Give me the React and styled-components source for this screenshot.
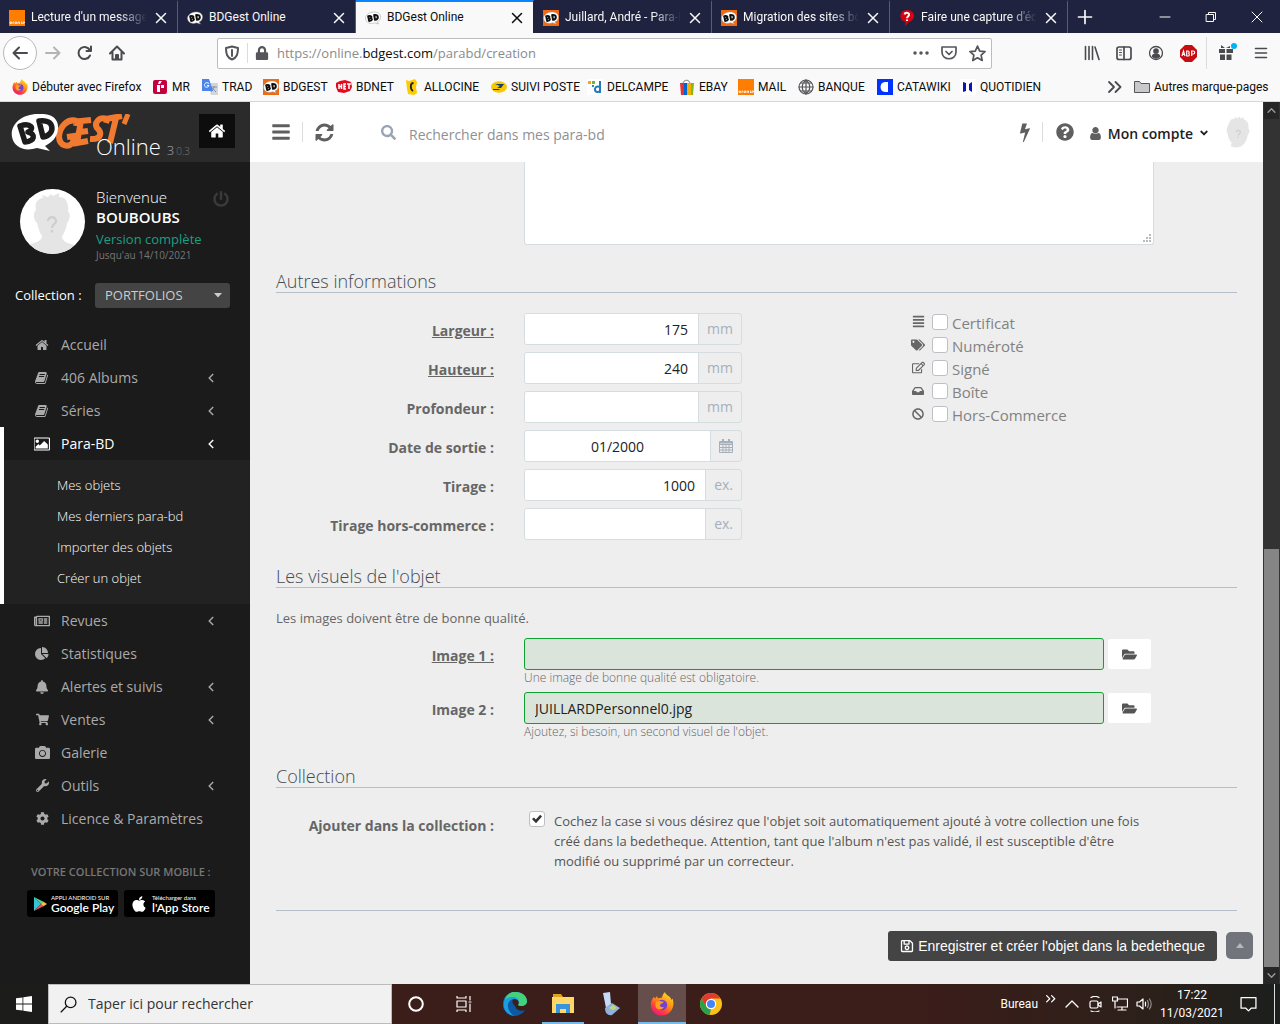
import React from "react";
import styled, { createGlobalStyle, css } from "styled-components";
import {
  FaRegNewspaper, FaBell, FaShoppingCart, FaCamera, FaWrench, FaCog,
  FaPowerOff, FaBars, FaSearch, FaQuestionCircle, FaAlignJustify, FaTags, FaRegEdit,
  FaInbox, FaBan, FaFolderOpen, FaRegSave, FaAngleDown, FaApple, FaLock,
} from "react-icons/fa";

const Global = createGlobalStyle`
  *, *::before, *::after { box-sizing: border-box; }
  body { margin: 0; font-family: "Open Sans", "Noto Sans", sans-serif; }
  button, input, select, textarea { font: inherit; color: inherit; margin: 0; }
  button { border: 0; padding: 0; background: none; }
  svg { display: block; flex: none; }
  h2, p, ul { margin: 0; padding: 0; font-weight: inherit; }
  ul { list-style: none; }
  a { color: inherit; text-decoration: none; }
`;

const uiFont = `"Open Sans", "Noto Sans", sans-serif`;
const compactFont = `Roboto, "Open Sans", sans-serif`;

/* ---------- drawings ---------- */

const Glyph = ({ d, size = 14, box = "0 0 1792 1792", color = "currentColor" }) => (
  <svg width={size} height={size} viewBox={box} fill={color} aria-hidden="true"><path d={d} /></svg>
);

const shapes = {
  home: "M1472 992v480q0 26-19 45t-45 19h-384v-384h-256v384h-384q-26 0-45-19t-19-45v-480q0-1 .5-3t.5-3l575-474 575 474q1 2 1 6zm223-69l-62 74q-8 9-21 11h-3q-13 0-21-7l-692-577-692 577q-12 8-24 7-13-2-21-11l-62-74q-8-10-7-23.5t11-21.5l719-599q32-26 76-26t76 26l244 204v-195q0-14 9-23t23-9h192q14 0 23 9t9 23v408l219 182q10 8 11 21.5t-7 23.5z",
  book: "M1639 478q40 57 18 129l-275 906q-19 64-76.5 107.5t-122.5 43.5h-923q-77 0-148.5-53.5t-99.5-131.5q-24-67-2-127 0-4 3-27t4-37q1-8-3-21.5t-3-19.5q2-11 8-21t16.5-23.5 16.5-23.5q23-38 45-91.5t30-91.5q3-10 .5-30t-.5-28q3-11 17-28t17-23q21-36 42-92t25-90q1-9-2.5-32t.5-28q4-13 22-30.5t22-22.5q19-26 42.5-84.5t27.5-96.5q1-8-3-25.5t-2-26.5q2-8 9-18t18-23 17-21q8-12 16.5-30.5t15-35 16-36 19.5-32 26.5-23.5 36-11.5 47.5 5.5l-1 3q38-9 51-9h761q74 0 114 56t18 130l-274 906q-36 119-71.5 153.5t-128.5 34.5h-869q-27 0-38 15-11 16-1 43 24 70 144 70h923q29 0 56-15.5t35-41.5l300-987q7-22 5-57 38 15 59 43zm-1064 2q-4 13 2 22.5t20 9.5h608q13 0 25.5-9.5t16.5-22.5l21-64q4-13-2-22.5t-20-9.5h-608q-13 0-25.5 9.5t-16.5 22.5zm-83 256q-4 13 2 22.5t20 9.5h608q13 0 25.5-9.5t16.5-22.5l21-64q4-13-2-22.5t-20-9.5h-608q-13 0-25.5 9.5t-16.5 22.5z",
  refresh: "M1639 1056q0 5-1 7-64 268-268 434.5t-478 166.5q-146 0-282.5-55t-243.5-157l-129 129q-19 19-45 19t-45-19-19-45v-448q0-26 19-45t45-19h448q26 0 45 19t19 45-19 45l-137 137q71 66 161 102t187 36q134 0 250-65t186-179q11-17 53-117 8-23 30-23h192q13 0 22.5 9.5t9.5 22.5zm25-800v448q0 26-19 45t-45 19h-448q-26 0-45-19t-19-45 19-45l138-138q-148-137-349-137-134 0-250 65t-186 179q-11 17-53 117-8 23-30 23h-199q-13 0-22.5-9.5t-9.5-22.5v-7q65-268 270-434.5t480-166.5q146 0 284 55.5t245 156.5l130-129q19-19 45-19t45 19 19 45z",
  pie: "M768 890l546 546q-106 108-247.5 168t-298.5 60q-209 0-385.5-103t-279.5-279.5-103-385.5 103-385.5 279.5-279.5 385.5-103v762zm187 6h773q0 157-60 298.5t-168 247.5zm709-128h-768v-768q209 0 385.5 103t279.5 279.5 103 385.5z",
  bolt: "M1333 566q18 20 7 44l-540 1157q-13 25-42 25-4 0-14-2-17-5-25.5-19t-4.5-30l197-808-406 101q-4 1-12 1-18 0-31-11-18-15-13-39l201-825q4-14 16-23t28-9h328q19 0 32 12.5t13 29.5q0 8-5 18l-171 463 396-98q8-2 12-2 19 0 34 15z",
  picture: "M576 576q0 80-56 136t-136 56-136-56-56-136 56-136 136-56 136 56 56 136zm1024 384v448h-1408v-192l320-320 160 160 512-512zm96-704h-1600q-13 0-22.5 9.5t-9.5 22.5v1216q0 13 9.5 22.5t22.5 9.5h1600q13 0 22.5-9.5t9.5-22.5v-1216q0-13-9.5-22.5t-22.5-9.5zm160 32v1216q0 66-47 113t-113 47h-1600q-66 0-113-47t-47-113v-1216q0-66 47-113t113-47h1600q66 0 113 47t47 113z",
  user: "M1536 1399q0 109-62.5 187t-150.5 78h-854q-88 0-150.5-78t-62.5-187q0-85 8.5-160.5t31.5-152 58.5-131 94-89 134.5-34.5q131 128 313 128t313-128q76 0 134.5 34.5t94 89 58.5 131 31.5 152 8.5 160.5zm-256-887q0 159-112.5 271.5t-271.5 112.5-271.5-112.5-112.5-271.5 112.5-271.5 271.5-112.5 271.5 112.5 112.5 271.5z",
};

const Line = ({ size = 16, w = 2, children, color = "currentColor" }) => (
  <svg width={size} height={size} viewBox="0 0 16 16" fill="none" stroke={color} strokeWidth={w} strokeLinecap="round" strokeLinejoin="round" aria-hidden="true">{children}</svg>
);

const Chevron = () => (
  <svg width="6" height="10" viewBox="0 0 6 10" fill="none" stroke="currentColor" strokeWidth="1.400" aria-hidden="true"><path d="M5.200 1L1.200 5l4 4" /></svg>
);

const OrangeIcon = () => (
  <svg width="16" height="16" viewBox="0 0 16 16" aria-hidden="true">
    <path fill="#ff7d00" d="M0 0h16v16H0z" />
    <path stroke="#fff" strokeWidth=".8" fill="none" d="M1 12h1.500v1.500H1zM4 14v-2h1M6 12h1.500v1.500H6zM9 14v-2h1.500v2M12 12h1v1.500h-1M14 12h1.500v1H14v1" />
  </svg>
);

const BdIcon = ({ bg = "none" }) => (
  <svg width="16" height="16" viewBox="0 0 16 16" aria-hidden="true">
    <path fill={bg} d="M0 0h16v16H0z" />
    <path fill="#fff" stroke="#999" strokeWidth=".5" d="M.6 9C0 5.500 3.500 2.500 8.500 2c4.500-.2 7 2 7 5 0 2.500-1.500 4.200-3.500 5l1.500 2-4-1.200C5 14.500 1.200 12.500.6 9z" />
    <path fill="none" stroke="#111" strokeWidth="2" strokeLinejoin="round" d="M3.200 6.300l1 4.700c3.200-.2 3.500-2.300 1.300-2.700C7.500 7 6 5.400 3.200 6.300zM9.200 5l.8 4.800c3.800-.6 4-5.400-.8-4.800z" />
  </svg>
);

const FirefoxIcon = ({ size = 16 }) => (
  <svg width={size} height={size} viewBox="0 0 24 24" aria-hidden="true">
    <defs>
      <linearGradient id={`fx${size}`} x1=".8" y1="0" x2=".2" y2="1">
        <stop offset="0" stopColor="#ffe226" /><stop offset=".45" stopColor="#ff8a16" /><stop offset=".75" stopColor="#ff3647" /><stop offset="1" stopColor="#e31587" />
      </linearGradient>
    </defs>
    <path fill={`url(#fx${size})`} d="M3.500 5l1.800 1.200L7 4l.8 2.500C10 5.500 12 5.800 12 5.800 12 3 15 0 15 0c0 3 6 4 6.500 8l1-1.500C24 10 23.800 15 21 19c-4 5.500-12 6-16.500 2S-.5 10.500 3.500 5z" />
    <circle cx="12" cy="13" r="5.200" fill="#7540d8" />
    <path fill="#ff9f1a" d="M6 9.500C9 8 11 10 13.500 9.500c0 2-3 2-3.500 3.500s1.500 3 4 2c-1.500 3-6 3.500-8 .5-1-2-.5-4.500 0-6z" />
  </svg>
);

const FaceIcon = ({ size, plain }) => (
  <svg width={size} height={size} viewBox="0 0 65 65" aria-hidden="true">
    <path fill="#e5e5e5" d={plain
      ? "M14 22C12 10 20 4 24 6l2-4 4 3 4-4 3 4 5-3 1 5c9 2 10 12 9 18 3 1 3 8-1 11-2 12-6 20-14 24-7 3-16 2-20-1 3-4 2-8-1-10-4-6-4-10-5-14-3-5-3-11 7-29z"
      : "M16 21c-2-8 3-12 7-12l-1-3 6 2 3-3 2 2 6-3 0 4c7 0 10 6 9 15 3 0 2 8-1 11-1 8-4 11-5 14 1 6 8 6 14 9-7 8-14 9-23 9S17 63 9 56c5-3 13-3 13-9-2-3-4-8-5-13-4-3-4-11-1-13z"} />
    <path fill="none" stroke="#cfcfcf" strokeWidth="2.400" d="M28 32c0-5 8-5 8 0 0 3-4 3-4 7m0 2v2.500" />
  </svg>
);

const LogoMark = () => (
  <svg width="121" height="42" viewBox="0 0 121 42" role="img" aria-label="BDGest">
    <g fill="none" stroke="#f27a30" strokeWidth="6">
      <path d="M65 12l1-5C56 4 49 13 48 22c0 11 11 12 14 6l1-6-7 1" />
      <path d="M80 6l-10 1-4 22 11-2M69 18l8-1" />
      <path d="M95 9l1-4C88 2 83 9 86 14c5 4 5 12-7 11" />
      <path d="M95 5l16-3M105 4l-6 25" />
      <path strokeWidth="5" d="M117 0l-4 10" />
    </g>
    <path fill="#fff" d="M1 23C-1 11 10 0 27 0c14-1 21 5 20 15-1 9-6 13-13 17l5 5-13-3C13 38 3 33 1 23z" />
    <path fill="none" stroke="#1c1c1c" strokeWidth="5.500" strokeLinejoin="round" d="M9 12l5 16c10-1 11-8 3-10 7-3 3-10-8-6zM28 7l4 16c13-2 12-19-4-16z" />
  </svg>
);

const CalendarIcon = () => (
  <svg width="14" height="14" viewBox="0 0 14 14" fill="none" stroke="currentColor" aria-hidden="true">
    <path d="M.5 2.500h13v11H.5zM.5 5.500h13M.5 8.500h13M.5 11h13M4 5.500v8M7 5.500v8M10 5.500v8" /><path strokeWidth="2" d="M1 3.500h12M4 0v4M10 0v4" />
  </svg>
);

/* ---------- browser chrome ---------- */

const Screen = styled.div`
  display: flex; flex-direction: column; height: 100vh; overflow: hidden;
  background: #f9f9fa; font-size: 14px;
`;
const TabStrip = styled.header`
  display: flex; height: 33px; flex: none; background: #20233f; color: #f9f9fa;
  font: 12px/33px ${compactFont};
`;
const Tab = styled.div`
  display: flex; align-items: center; gap: 6px; flex: 0 1 178px; min-width: 0; padding: 0 8px 0 9px;
  border-right: 1px solid #5a5c73; border-top: 2px solid transparent; line-height: 31px;
  ${(p) => p.$active && css`background: #f9f9fa; color: #0c0c0d; border-top-color: #0a84ff; border-right-color: #20233f;`}
`;
const TabTitle = styled.span`
  flex: 1; overflow: hidden; white-space: nowrap;
  mask-image: linear-gradient(to right, #000 75%, transparent 100%);
  ${(p) => p.$short && css`mask-image: none;`}
`;
const IconButton = styled.button`
  display: flex; align-items: center; justify-content: center; flex: none;
  width: ${(p) => p.$w || 16}px; height: ${(p) => p.$h || 16}px; color: ${(p) => p.$c || "inherit"};
`;
const WindowButtons = styled.div`display: flex; margin-left: auto;`;

const NavBar = styled.div`
  display: flex; align-items: center; height: 40px; flex: none; padding: 0 3px; color: #4a4a4f;
`;
const BackButton = styled(IconButton)`
  width: 34px; height: 34px; border: 1px solid #b8b8ba; border-radius: 50%; background: #fff;
`;
const AddressBar = styled.div`
  display: flex; align-items: center; flex: 0 1 775px; height: 31px; margin-left: 84px; padding: 0 0 0 6px;
  border: 1px solid #bdbdbf; border-radius: 2px; background: #fff; color: #55555a;
`;
const Divider = styled.span`
  width: 1px; height: ${(p) => p.$h || 20}px; margin: 0 ${(p) => p.$m || 0}px; background: #dcdcdf; flex: none;
`;
const Address = styled.div`
  flex: 1; display: flex; padding-left: 8px; font: 13px/20px ${uiFont}; color: #8a8a8d; white-space: nowrap;
  b { font-weight: 400; color: #0c0c0d; }
`;
const NavTools = styled.div`display: flex; align-items: center; margin-left: auto;`;
const Bookmarks = styled.nav`
  display: flex; align-items: center; height: 29px; flex: none; padding: 0 12px; border-bottom: 1px solid #d7d7db;
  font: 12px/28px ${compactFont}; color: #0c0c0d; white-space: nowrap;
`;
const Bookmark = styled.a`
  display: flex; align-items: center; gap: 4px; flex: 0 1 ${(p) => p.$w}px; min-width: 0;
`;
const MoreBookmarks = styled.div`display: flex; align-items: center; gap: 11px; margin-left: auto;`;

/* ---------- application frame ---------- */

const Page = styled.div`display: flex; flex: 1; min-height: 0; background: #eee;`;
const Sidebar = styled.aside`width: 250px; flex: none; background: #1b1b1b; color: #aaa; overflow: hidden;`;
const Brand = styled.div`
  position: relative; display: flex; align-items: flex-start; height: 60px; padding: 12px 15px 0 11px; background: #2b2b2b;
`;
const BrandName = styled.span`
  position: absolute; left: 96px; top: 30px; font-size: 22px; font-weight: 300; line-height: 28px; color: #fff;
  display: flex; align-items: baseline; gap: 6px;
  small { font-size: 13px; color: #aaa; }
  small > small { font-size: 10px; color: #777; padding-left: 2px; }
`;
const HomeButton = styled(IconButton)`width: 36px; height: 34px; margin-left: auto; background: #0d0d0d; color: #fff;`;
const Profile = styled.div`display: flex; gap: 11px; padding: 25px 24px 0 20px;`;
const Avatar = styled.div`width: 65px; height: 65px; margin-top: 2px; border-radius: 50%; overflow: hidden; background: #fff; flex: none;`;
const Who = styled.div`
  flex: 1; font-size: 15px; font-weight: 300; line-height: 20px; color: #fff; white-space: nowrap;
  strong { display: block; font-weight: 600; }
  em { display: block; font-style: normal; font-weight: 400; font-size: 13px; line-height: 24px; color: #16a085; }
  small { display: block; font-weight: 400; font-size: 10px; line-height: 8px; color: #777; }
`;
const CollectionRow = styled.label`
  display: flex; align-items: center; justify-content: space-between; margin: 24px 20px 0 15px;
  font-size: 13px; line-height: 25px; color: #fff;
`;
const SelectWrap = styled.span`
  display: grid; align-items: center; width: 135px; color: #ccc;
  select {
    grid-area: 1 / 1; appearance: none; height: 25px; padding: 0 24px 0 10px; border: 0; border-radius: 3px;
    background: #444; color: #ccc; font-size: 13px;
  }
  svg { grid-area: 1 / 1; justify-self: end; margin-right: 8px; pointer-events: none; }
`;
const Menu = styled.ul`margin-top: 20px;`;
const MenuGroup = styled.li`${(p) => p.$open && css`border-left: 4px solid #fff;`}`;
const MenuLink = styled.a`
  display: flex; align-items: center; height: 33px; padding: 0 36px 0 ${(p) => (p.$open ? 28 : 32)}px; font-size: 14px;
  color: ${(p) => (p.$open ? "#fff" : "#aaa")};
  > span:first-child { width: 20px; display: flex; justify-content: center; margin-right: 9px; }
  > svg { margin-left: auto; }
`;
const SubMenu = styled.ul`
  padding: 10px 0 10px 53px; background: #222; color: #fff; font-size: 13px; font-weight: 300; line-height: 31px;
`;
const MobileTitle = styled.p`margin: 27px 0 8px 31px; font-size: 11px; line-height: 20px; font-weight: 600; color: #777; white-space: nowrap;`;
const Stores = styled.div`display: flex; gap: 6px; padding-left: 27px;`;
const Store = styled.a`
  display: flex; align-items: center; gap: 4px; width: 91px; height: 27px; padding: 0 6px; border-radius: 3px;
  background: #000; color: #fff; font: 600 12px/13px "Lato", "Open Sans", sans-serif; white-space: nowrap;
  small { display: block; font-size: 6px; line-height: 7px; font-weight: 400; }
`;

const MainColumn = styled.div`flex: 1; min-width: 0; display: flex; flex-direction: column;`;
const TopBar = styled.div`
  display: flex; align-items: center; height: 60px; flex: none; padding: 0 8px 0 22px; background: #fff; color: #5f5f5f;
`;
const SearchBox = styled.label`
  display: flex; align-items: center; gap: 13px; flex: 1; margin-left: 48px; color: #9aa5b1;
  input { flex: 1; min-width: 0; height: 30px; padding: 4px 0 0; border: 0; outline: 0; background: none; font-size: 14px; font-weight: 400; }
  input::placeholder { color: #8f8f94; opacity: 1; }
`;
const Account = styled.button`
  display: flex; align-items: center; gap: 5px; margin: 2px 12px 0 9px; font-size: 14px; font-weight: 600; color: #1d1d22; white-space: nowrap;
`;
const ScrollBar = styled.div`
  display: flex; flex-direction: column; width: 17px; flex: none; padding: 0 1px; background: #333; color: #999;
`;
const ScrollArrow = styled(IconButton)`width: 15px; height: 17px; background: #262626;`;
const Thumb = styled.span`flex: 418 0 0; background: #858585;`;
const Track = styled.span`flex: 430 0 0;`;

/* ---------- form ---------- */

const Form = styled.form`flex: 1; padding: 0 26px; color: #666; overflow: hidden;`;
const FieldRow = styled.div`
  display: grid; grid-template-columns: 218px 1fr; column-gap: 30px; margin-bottom: ${(p) => p.$gap || 0}px;
`;
const Notes = styled.textarea`
  grid-column: 2; display: block; width: 630px; max-width: 100%; height: 83px; border: 1px solid #d5dde0; border-top: 0;
  border-radius: 0 0 3px 3px; background: #fff; resize: vertical; outline: 0;
  &::-webkit-resizer {
    background:
      linear-gradient(#bbb, #bbb) 11px 11px / 2px 2px no-repeat,
      linear-gradient(#bbb, #bbb) 8px 11px / 2px 2px no-repeat,
      linear-gradient(#bbb, #bbb) 5px 11px / 2px 2px no-repeat,
      linear-gradient(#bbb, #bbb) 11px 8px / 2px 2px no-repeat,
      linear-gradient(#bbb, #bbb) 8px 8px / 2px 2px no-repeat,
      linear-gradient(#bbb, #bbb) 11px 5px / 2px 2px no-repeat;
  }
`;
const Title = styled.h2`
  margin: ${(p) => p.$mt}px 0 20px; border-bottom: 1px solid #b4bfc9; font-size: 18px; line-height: 22px; font-weight: 300; color: #444b52;
`;
const Label = styled.label`
  padding-top: 4px; text-align: right; font-size: 14px; line-height: 28px; font-weight: 700; color: #666;
  text-decoration: ${(p) => (p.$required ? "underline" : "none")};
`;
const Columns = styled.div`display: flex; > :last-child { margin-left: 168px; }`;
const Group = styled.div`
  display: flex; width: 218px; height: 32px; border: 1px solid #d5dde0; border-radius: 3px; overflow: hidden; color: #a5b0bb; font-size: 14px; line-height: 28px;
  input {
    flex: 1; min-width: 0; padding: 2px 10px 0; border: 0; border-right: 1px solid #d5dde0; background: #fff;
    color: #222; text-align: ${(p) => p.$align || "right"}; outline: 0;
  }
  span { display: flex; align-items: center; justify-content: center; padding: 0 8px; }
`;
const Options = styled.ul`width: 200px; margin-top: -3px;`;
const Option = styled.li`
  display: flex; align-items: center; height: 23px; font-size: 15px; line-height: 20px; color: #828282;
  > span { width: 16px; margin-right: 6px; display: flex; justify-content: center; color: #666; }
  label { padding: 2px 0 0 4px; }
`;
const Check = styled.input`
  appearance: none; display: grid; place-items: center; width: 16px; height: 16px; flex: none; border: 1px solid #bfbfc6; border-radius: 3px; background: #fff;
  &:checked::before {
    content: ""; width: 10px; height: 9px; background: #333;
    clip-path: polygon(0 50%, 20% 34%, 38% 55%, 82% 4%, 100% 22%, 40% 96%);
  }
`;
const Intro = styled.p`font-size: 13px; line-height: 20px; margin-bottom: 10px;`;
const FileLine = styled.div`
  display: flex; gap: 4px;
  input { flex: 0 1 580px; min-width: 0; height: 32px; padding: 0 10px; border: 1px solid #0fa032; border-radius: 3px; background: #dbe4db; color: #222; outline: 0; }
  button { width: 43px; height: 30px; margin-top: 1px; display: flex; align-items: center; justify-content: center; background: #fff; border-radius: 2px; color: #555; }
`;
const Hint = styled.p`font-size: 12px; line-height: 16px; font-weight: 300; color: #666;`;
const AutoAdd = styled.div`
  display: flex; align-items: flex-start; gap: 9px; padding: 3px 80px 0 5px; font-size: 13px; line-height: 20px; color: #555;
`;
const Footer = styled.div`
  display: flex; justify-content: flex-end; gap: 9px; margin-right: -16px; padding-top: 20px;
`;
const Rule = styled.hr`margin: 39px 0 0; border: 0; border-top: 1px solid #b4bfc9;`;
const SaveButton = styled.button`
  display: flex; align-items: center; gap: 4px; height: 30px; padding: 0 12px; border-radius: 3px; background: #444; color: #fff;
  font: 14px/30px "Liberation Sans", Arial, sans-serif; white-space: nowrap;
`;
const TopButton = styled(IconButton)`width: 27px; height: 27px; margin-top: 1px; border-radius: 5px; background: #71757b; color: #b5b8c4;`;

/* ---------- task bar ---------- */

const TaskBar = styled.footer`
  display: flex; align-items: stretch; height: 40px; flex: none; color: #fff; font: 12px/18px ${compactFont};
  background: linear-gradient(to right, #1c1c1b 0, #1c1c1b 48px, #3b1d1a 392px, #3b1d1a 72%, #2c201a 90%, #1c1f1d 100%);
`;
const TaskSearch = styled.label`
  display: flex; align-items: center; gap: 11px; width: 344px; padding: 0 11px; background: #f1f1f1; border: 1px solid #bbb; color: #111;
  input { flex: 1; min-width: 0; border: 0; outline: 0; padding: 0; background: none; font: 14px/20px ${uiFont}; }
  input::placeholder { color: #333; opacity: 1; }
`;
const TaskButton = styled.button`
  display: flex; align-items: center; justify-content: center; width: ${(p) => p.$w || 49}px;
  background: ${(p) => (p.$active ? "#654e4b" : "none")};
  box-shadow: ${(p) => (p.$running ? "inset 0 -2px #76b9ed" : "none")};
`;
const Tray = styled.div`display: flex; align-items: center; margin-left: auto; padding-right: 3px;`;
const TrayIcons = styled.div`display: flex; align-items: center; gap: 8px; margin-right: 8px;`;
const More = styled.span`align-self: flex-start;`;
const Clock = styled.time`width: 64px; text-align: center;`;

const CloseX = () => <Line size={16} w={1.5}><path d="M3.500 3.500l9 9M12.500 3.500l-9 9" /></Line>;

const tabs = [
  { title: "Lecture d'un message - Orange", icon: <OrangeIcon /> },
  { title: "BDGest Online", icon: <BdIcon />, short: true },
  { title: "BDGest Online", icon: <BdIcon />, short: true, active: true },
  { title: "Juillard, André - Para-BD", icon: <BdIcon bg="#f26a0f" /> },
  { title: "Migration des sites bdgest", icon: <BdIcon bg="#f26a0f" /> },
  { title: "Faire une capture d'écran", icon: (
    <svg width="16" height="16" viewBox="0 0 16 16" aria-hidden="true"><path fill="#d8000f" d="M8 0c9 0 9 10 2 12l-4 4 .5-4C-1 10 0 0 8 0z" /><path stroke="#fff" strokeWidth="2" fill="none" d="M5.500 4.500C6 2 10.500 2.500 10 5c-.3 1.500-2 1.500-2 3.200M8 9.500v1.500" /></svg>
  ) },
];

const bookmarks = [
  { name: "Débuter avec Firefox", w: 140, icon: <FirefoxIcon /> },
  { name: "MR", w: 50, icon: <svg width="16" height="16" viewBox="0 0 16 16"><rect x="1" y="1" width="14" height="14" rx="2" fill="#c4003e" /><path fill="#fff" d="M5 6h3v7H5zM9 6h3v3H9zM7 2h3L8 5H6z" /></svg> },
  { name: "TRAD", w: 61, icon: <svg width="16" height="16" viewBox="0 0 16 16"><path fill="#d5d5d5" d="M6 4h10v12H9z" /><path stroke="#8295a5" fill="none" d="M9 8h6M12 7v1c0 2-2 4-3 5M10 9l4 4" /><path fill="#4a85ee" d="M0 0h7l4 12H0z" /><path stroke="#fff" fill="none" d="M7 4.500C4 2.500 2 5 2.500 6.500 3 9 7 8.500 7 6.500H5" /></svg> },
  { name: "BDGEST", w: 73, icon: <BdIcon bg="#f26a0f" /> },
  { name: "BDNET", w: 68, icon: <svg width="16" height="16" viewBox="0 0 16 16"><path fill="#e30b20" d="M0 4l4-2 5-1 6 2 1 5-2 4-6 2-6-1-2-5z" /><path stroke="#fff" strokeWidth="1.500" fill="none" d="M3 5v5M5.500 5v5M3 7.500h2.500M10 5H8v5h2M8 7.500h2M11 5h4M13 5v5" /></svg> },
  { name: "ALLOCINE", w: 87, icon: <svg width="16" height="16" viewBox="0 0 16 16"><path fill="#fecc00" d="M2 1l3 1 6-2 2 3-1 5 1 6-3 2-6-1-1-5z" /><path stroke="#222" strokeWidth="1.800" fill="none" d="M9.500 4C6 4 6 10 9 12" /></svg> },
  { name: "SUIVI POSTE", w: 96, icon: <svg width="16" height="16" viewBox="0 0 16 16"><ellipse cx="8" cy="8" rx="8" ry="5.800" fill="#f5c800" /><path fill="#173a7a" d="M4 5h9l-3 4H6l3-2zM2 10h7l-1 1H2z" /></svg> },
  { name: "DELCAMPE", w: 92, icon: <svg width="16" height="16" viewBox="0 0 16 16"><path fill="#fff" d="M0 0h16v16H0z" /><path fill="#f6a21a" d="M1 2h3v3H1z" /><path fill="#69b445" d="M5 2h3v3H5z" /><path fill="#2785c7" d="M5 6h2v2H5z" /><path stroke="#2179bd" strokeWidth="2" fill="none" d="M13 2v12M13 8c-5-2-7 4-3 5 2 .5 3-1 3-2" /></svg> },
  { name: "EBAY", w: 59, icon: <svg width="16" height="16" viewBox="0 0 16 16"><path fill="none" stroke="#777" d="M4 5c0-5 7-5 7 0" /><path fill="#e53238" d="M1 4h4v12H2z" /><path fill="#0064d2" d="M5 4h3v12H5z" /><path fill="#f5af02" d="M8 4h4v12H8z" /><path fill="#86b817" d="M12 4h3l-1 12h-2z" /></svg> },
  { name: "MAIL", w: 60, icon: <OrangeIcon /> },
  { name: "BANQUE", w: 79, icon: <Line w={1.2} color="#55555a"><circle cx="8" cy="8" r="7" /><path d="M1 8h14M8 1v14M3 4h10M3 12h10M8 1C3 5 3 11 8 15M8 1c5 4 5 10 0 14" /></Line> },
  { name: "CATAWIKI", w: 83, icon: <svg width="16" height="16" viewBox="0 0 16 16"><path fill="#0033ff" d="M0 0h16v16H0z" /><path fill="#fff" d="M11 3v10H8C2 13 2 3 8 3z" /></svg> },
  { name: "QUOTIDIEN", w: 84, icon: <svg width="16" height="16" viewBox="0 0 16 16"><path fill="#fff" d="M0 0h16v16H0z" /><path fill="#0d13b4" d="M3 3l3 1v8l-3 1zM12 3L9 5v6l3 2z" /></svg> },
];

const menuEntries = [
  { name: "Accueil", icon: <Glyph d={shapes.home} /> },
  { name: "406 Albums", icon: <Glyph d={shapes.book} />, more: true },
  { name: "Séries", icon: <Glyph d={shapes.book} />, more: true },
  { name: "Para-BD", icon: <Glyph d={shapes.picture} size={16} box="0 0 1856 1792" />, more: true, open: true, items: ["Mes objets", "Mes derniers para-bd", "Importer des objets", "Créer un objet"] },
  { name: "Revues", icon: <FaRegNewspaper size={16} />, more: true },
  { name: "Statistiques", icon: <Glyph d={shapes.pie} /> },
  { name: "Alertes et suivis", icon: <FaBell size={14} />, more: true },
  { name: "Ventes", icon: <FaShoppingCart size={13} />, more: true },
  { name: "Galerie", icon: <FaCamera size={15} /> },
  { name: "Outils", icon: <FaWrench size={13} />, more: true },
  { name: "Licence & Paramètres", icon: <FaCog size={13} /> },
];

const fields = [
  { id: "largeur", label: "Largeur :", value: "175", unit: "mm", required: true },
  { id: "hauteur", label: "Hauteur :", value: "240", unit: "mm", required: true },
  { id: "profondeur", label: "Profondeur :", value: "", unit: "mm" },
  { id: "sortie", label: "Date de sortie :", value: "01/2000", unit: <CalendarIcon />, align: "center" },
  { id: "tirage", label: "Tirage :", value: "1000", unit: "ex." },
  { id: "tirage-hc", label: "Tirage hors-commerce :", value: "", unit: "ex." },
];

const options = [
  { id: "certificat", label: "Certificat", icon: <FaAlignJustify size={13} /> },
  { id: "numerote", label: "Numéroté", icon: <FaTags size={14} /> },
  { id: "signe", label: "Signé", icon: <FaRegEdit size={13} /> },
  { id: "boite", label: "Boîte", icon: <FaInbox size={12} /> },
  { id: "hors-commerce", label: "Hors-Commerce", icon: <FaBan size={12} /> },
];

const images = [
  { id: "image1", label: "Image 1 :", value: "", hint: "Une image de bonne qualité est obligatoire.", required: true },
  { id: "image2", label: "Image 2 :", value: "JUILLARDPersonnel0.jpg", hint: "Ajoutez, si besoin, un second visuel de l'objet." },
];

function BrowserChrome() {
  return (
    <>
      <TabStrip>
        {tabs.map((t, i) => (
          <Tab key={i} $active={t.active}>
            {t.icon}
            <TabTitle $short={t.short}>{t.title}</TabTitle>
            <IconButton aria-label="Fermer l'onglet"><CloseX /></IconButton>
          </Tab>
        ))}
        <IconButton $w={34} $h={33} aria-label="Nouvel onglet"><Line w={1.7}><path d="M8 1.500v13M1.500 8h13" /></Line></IconButton>
        <WindowButtons>
          <IconButton $w={46} $h={33} aria-label="Réduire"><Line w={1} size={16}><path d="M3 8h10" /></Line></IconButton>
          <IconButton $w={46} $h={33} aria-label="Restaurer"><Line w={1}><path d="M3.500 5.500h7v7h-7zM5.500 5.500v-2h7v7h-2" /></Line></IconButton>
          <IconButton $w={46} $h={33} aria-label="Fermer"><Line w={1}><path d="M3 3l10 10M13 3L3 13" /></Line></IconButton>
        </WindowButtons>
      </TabStrip>
      <NavBar>
        <BackButton aria-label="Précédent"><Line><path d="M15 8H1.500M7 2.500L1.500 8 7 13.500" /></Line></BackButton>
        <IconButton $w={32} $h={32} $c="#b4b4b6" aria-label="Suivant"><Line><path d="M1 8h13.500M9 2.500L14.500 8 9 13.500" /></Line></IconButton>
        <IconButton $w={32} $h={32} aria-label="Actualiser"><Line><path d="M13 10.500A6 6 0 1 1 13 5.500M14 1.500V6H9.500" /></Line></IconButton>
        <IconButton $w={32} $h={32} aria-label="Accueil"><Line><path d="M1 8.500L8 1.500l7 7M3.500 7.500v7h9v-7M7 14v-4h2v4" /></Line></IconButton>
        <AddressBar>
          <Line><path d="M8 1.500L14 3c0 6-1 9.500-6 11.500C3 12.500 2 9 2 3z" /><path d="M8 5v6" /></Line>
          <Divider $m={7} />
          <FaLock size={14} />
          <Address>https://online.<b>bdgest.com</b>/parabd/creation</Address>
          <IconButton $w={28} aria-label="Actions"><Line><path strokeWidth="3.500" d="M2 8h0M8 8h0M14 8h0" /></Line></IconButton>
          <IconButton $w={28} aria-label="Pocket"><Line w={1.7}><path d="M1 2h14v5c0 9-14 9-14 0zM5 6.500l3 3 3-3" /></Line></IconButton>
          <IconButton $w={28} aria-label="Marquer cette page"><Line size={17} w={1.6}><path d="M8 1l2.100 4.700 5 .5-3.700 3.400 1 5L8 12l-4.400 2.600 1-5L.9 6.200l5-.5z" /></Line></IconButton>
        </AddressBar>
        <NavTools>
          <IconButton $w={32} aria-label="Bibliothèque"><Line w={1.6}><path d="M1.500 1.500v13M5 1.500v13M8.500 1.500v13M11 2l4 12.500" /></Line></IconButton>
          <IconButton $w={32} aria-label="Panneaux latéraux"><Line w={1.7}><rect x="1" y="2" width="14" height="12.500" rx="2" /><path d="M8 2v12.500" /><path strokeWidth="1" d="M3.500 5h2M3.500 7.500h2M3.500 10h2" /></Line></IconButton>
          <IconButton $w={32} aria-label="Compte"><Line w={1.3}><circle cx="8" cy="8" r="6.500" /><circle cx="8" cy="6" r="2.200" fill="currentColor" /><path fill="currentColor" d="M4.500 11.500c0-3 7-3 7 0-2 2-5 2-7 0z" /></Line></IconButton>
          <IconButton $w={32} aria-label="Adblock Plus"><svg width="17" height="17" viewBox="0 0 17 17"><path fill="#c70d12" d="M5 0h7l5 5v7l-5 5H5l-5-5V5z" /><path fill="none" stroke="#fff" strokeWidth="1.200" d="M2 11l1.500-5L5 11M2.500 9.500h2M6.700 6v5h1.500c1.500 0 1.500-2.500 0-2.500 1.300 0 1-2.500 0-2.500zM11.700 11V6h1.500c2 0 2 3 0 3h-1" /></svg></IconButton>
          <Divider $h={32} $m={2} />
          <IconButton $w={36} aria-label="Nouveautés"><svg width="20" height="20" viewBox="0 0 20 20"><path fill="#4a4a4f" d="M2 6h6v4H2zM9.500 6H16v4H9.500zM3 11.500h5V17H3zM9.500 11.500h5V17h-5zM4 2l4 3H4zM13 3l-4 2h4z" /><circle cx="17" cy="3" r="3" fill="#00b3f4" /></svg></IconButton>
          <IconButton $w={32} aria-label="Menu"><Line w={1.600}><path d="M2.500 3.500h11M2.500 8h11M2.500 12.500h11" /></Line></IconButton>
        </NavTools>
      </NavBar>
      <Bookmarks>
        {bookmarks.map((b) => <Bookmark key={b.name} href="#" $w={b.w}>{b.icon}{b.name}</Bookmark>)}
        <MoreBookmarks>
          <IconButton aria-label="Plus"><Line w={1.800} color="#4a4a4f"><path d="M2 3l5 5-5 5M8.500 3l5 5-5 5" /></Line></IconButton>
          <Bookmark href="#" $w={134}>
            <svg width="16" height="16" viewBox="0 0 16 16"><path fill="#c9c9cc" stroke="#555" d="M.5 2.500h5l1.500 2h8.500v9H.5z" /></svg>
            Autres marque-pages
          </Bookmark>
        </MoreBookmarks>
      </Bookmarks>
    </>
  );
}

function SideNav() {
  return (
    <Sidebar>
      <Brand>
        <LogoMark />
        <BrandName>Online <small>3<small>0.3</small></small></BrandName>
        <HomeButton aria-label="Accueil"><Glyph d={shapes.home} size={18} /></HomeButton>
      </Brand>
      <Profile>
        <Avatar><FaceIcon size={65} /></Avatar>
        <Who>Bienvenue<strong>BOUBOUBS</strong><em>Version complète</em><small>Jusqu'au 14/10/2021</small></Who>
        <IconButton $h={24} $c="#3a3a3a" aria-label="Déconnexion"><FaPowerOff size={16} /></IconButton>
      </Profile>
      <CollectionRow>
        Collection :
        <SelectWrap>
          <select defaultValue="PORTFOLIOS"><option>PORTFOLIOS</option></select>
          <svg width="8" height="5" viewBox="0 0 8 5"><path fill="currentColor" d="M0 0h8L4 4.500z" /></svg>
        </SelectWrap>
      </CollectionRow>
      <Menu>
        {menuEntries.map((m) => (
          <MenuGroup key={m.name} $open={m.open}>
            <MenuLink href="#" $open={m.open}><span>{m.icon}</span>{m.name}{m.more && <Chevron />}</MenuLink>
            {m.items && <SubMenu>{m.items.map((s) => <li key={s}><a href="#">{s}</a></li>)}</SubMenu>}
          </MenuGroup>
        ))}
      </Menu>
      <MobileTitle>VOTRE COLLECTION SUR MOBILE :</MobileTitle>
      <Stores>
        <Store href="#">
          <svg width="14" height="16" viewBox="0 0 14 16"><path fill="#35c3d6" d="M1 1v14l7-7z" /><path fill="#58d28a" d="M1 1l10 5-3 2z" /><path fill="#f0485f" d="M1 15l10-5-3-2z" /><path fill="#f7c33c" d="M10.500 5.700L14 8l-3.500 2.300L8 8z" /></svg>
          <span><small>APPLI ANDROID SUR</small>Google Play</span>
        </Store>
        <Store href="#"><FaApple size={18} /><span><small>Télécharger dans</small>l'App Store</span></Store>
      </Stores>
    </Sidebar>
  );
}

function ObjectForm() {
  return (
    <Form onSubmit={(e) => e.preventDefault()}>
      <FieldRow><Notes aria-label="Description" /></FieldRow>
      <Title $mt={25}>Autres informations</Title>
      <Columns>
        <div>
          {fields.map((f) => (
            <FieldRow key={f.id} $gap={7}>
              <Label htmlFor={f.id} $required={f.required}>{f.label}</Label>
              <Group $align={f.align}><input id={f.id} defaultValue={f.value} /><span>{f.unit}</span></Group>
            </FieldRow>
          ))}
        </div>
        <Options>
          {options.map((o) => (
            <Option key={o.id}><span>{o.icon}</span><Check type="checkbox" id={o.id} /><label htmlFor={o.id}>{o.label}</label></Option>
          ))}
        </Options>
      </Columns>
      <Title $mt={18}>Les visuels de l'objet</Title>
      <Intro>Les images doivent être de bonne qualité.</Intro>
      {images.map((f) => (
        <FieldRow key={f.id} $gap={6}>
          <Label htmlFor={f.id} $required={f.required}>{f.label}</Label>
          <div>
            <FileLine><input id={f.id} defaultValue={f.value} /><button type="button" aria-label="Parcourir"><FaFolderOpen size={15} /></button></FileLine>
            <Hint>{f.hint}</Hint>
          </div>
        </FieldRow>
      ))}
      <Title $mt={25}>Collection</Title>
      <FieldRow>
        <Label htmlFor="auto">Ajouter dans la collection :</Label>
        <AutoAdd>
          <Check type="checkbox" id="auto" defaultChecked />
          <label htmlFor="auto">Cochez la case si vous désirez que l'objet soit automatiquement ajouté à votre collection une fois créé dans la bedetheque. Attention, tant que l'album n'est pas validé, il est susceptible d'être modifié ou supprimé par un correcteur.</label>
        </AutoAdd>
      </FieldRow>
      <Rule />
      <Footer>
        <SaveButton type="submit"><FaRegSave size={14} />Enregistrer et créer l'objet dans la bedetheque</SaveButton>
        <TopButton type="button" aria-label="Haut de page"><svg width="8" height="5" viewBox="0 0 8 5"><path fill="currentColor" d="M0 5h8L4 0z" /></svg></TopButton>
      </Footer>
    </Form>
  );
}

function WindowsBar() {
  return (
    <TaskBar>
      <TaskButton $w={48} aria-label="Démarrer"><svg width="16" height="16" viewBox="0 0 16 16" fill="#fff"><path d="M0 2.300L6.500 1.400v6.200H0zM7.300 1.300L16 0v7.600H7.300zM0 8.400h6.500v6.200L0 13.700zM7.300 8.400H16V16l-8.700-1.300z" /></svg></TaskButton>
      <TaskSearch>
        <Line size={17} w={1.200}><circle cx="10" cy="6" r="5" /><path d="M6.300 9.700L1 15" /></Line>
        <input placeholder="Taper ici pour rechercher" />
      </TaskSearch>
      <TaskButton $w={48} aria-label="Cortana"><Line w={2}><circle cx="8" cy="8" r="6.800" /></Line></TaskButton>
      <TaskButton $w={48} aria-label="Affichage des tâches"><Line w={1.200}><path d="M1 0v2h9V0M1 16v-2h9v2M1 5h9v6H1zM14 0v4M14 8v8M13 6h2" /></Line></TaskButton>
      <TaskButton $w={54} aria-label="Edge">
        <svg width="24" height="24" viewBox="0 0 24 24"><path fill="#0c59a4" d="M12 0a12 12 0 1 0 10 18c-4 2-9 0-10-4-6-6 0-9 4-8z" /><path fill="#1b9de2" d="M1 9C3-3 23-3 24 9c0 5-6 6-9 4 3-4-3-8-7-5-5 3-4 11 3 16C4 23-1 17 1 9z" /><path fill="#45d07a" d="M10 0c8-1 14 4 14 9s-6 6-9 4c3-3 0-8-5-8C6 5 4 6 2 8c1-4 4-7 8-8z" /></svg>
      </TaskButton>
      <TaskButton $w={42} $running aria-label="Explorateur de fichiers">
        <svg width="22" height="20" viewBox="0 0 22 20"><path fill="#dfa418" d="M1 0h8l2 3H1z" /><path fill="#ffd768" d="M0 3h22v16H0z" /><path fill="#3994dc" d="M4 10h14v9h-4v-4H8v4H4z" /></svg>
      </TaskButton>
      <TaskButton $w={54} aria-label="Scanner">
        <svg width="20" height="24" viewBox="0 0 20 24"><path fill="#c4daf5" d="M2 1l7-1 1 12-5 4z" /><path fill="#8fb2df" d="M4 16l7-5 8 5-8 7c-4 1-7-2-7-7z" /><path fill="#c6d86a" d="M8 16l4-3 4 3-4 2z" /></svg>
      </TaskButton>
      <TaskButton $w={48} $active $running aria-label="Firefox"><FirefoxIcon size={24} /></TaskButton>
      <TaskButton $w={50} aria-label="Chrome">
        <svg width="22" height="22" viewBox="0 0 22 22"><circle cx="11" cy="11" r="11" fill="#fbc116" /><path fill="#e03b2f" d="M1.500 5.500A11 11 0 0 1 20.500 5.500H11L6 14z" /><path fill="#2aa14c" d="M1.500 5.500L6.200 13.800 11 16.500l-1.500 5.400A11 11 0 0 1 1.500 5.500z" /><circle cx="11" cy="11" r="5.200" fill="#fff" /><circle cx="11" cy="11" r="4" fill="#4285f4" /></svg>
      </TaskButton>
      <Tray>
        <TrayIcons>
          <span>Bureau</span>
          <More><Line size={10} w={2}><path d="M1 1l5 5-5 5M9 1l5 5-5 5" /></Line></More>
          <IconButton aria-label="Icônes cachées"><Line w={1.300}><path d="M2 11l6-6 6 6" /></Line></IconButton>
          <Line w={1.200}><rect x="2" y="5" width="8" height="7" rx="1.500" /><path d="M10 8l3-2v5l-3-2M3 1.500c2-1.500 6-1.500 8 0M3 15c2 1 6 1 8 0" /></Line>
          <Line w={1.200}><path d="M5 3h10.500v8H5M10 11v3M6 14h8M.5 1h5v4h-5zM3 5v7" /></Line>
          <Line w={1.200}><path d="M1 6h2.500L7 3v10l-3.500-3H1zM9.500 6v4" /><path opacity=".5" d="M11.500 4.500c1 2 1 5 0 7M13.500 3c2 3 2 7 0 10" /></Line>
        </TrayIcons>
        <Clock>17:22<br />11/03/2021</Clock>
        <IconButton $w={48} aria-label="Notifications"><Line size={17} w={1.200}><path d="M1 1.500h14v10h-4.500L8 14l-2.500-2.500H1z" /></Line></IconButton>
        <Divider $h={40} $m={2} />
      </Tray>
    </TaskBar>
  );
}

export default function App() {
  return (
    <Screen>
      <Global />
      <BrowserChrome />
      <Page>
        <SideNav />
        <MainColumn>
          <TopBar>
            <IconButton $w={18} aria-label="Menu"><FaBars size={20} /></IconButton>
            <Divider $m={12} />
            <IconButton $w={18} aria-label="Rafraîchir"><Glyph d={shapes.refresh} size={21} /></IconButton>
            <SearchBox><FaSearch size={15} /><input placeholder="Rechercher dans mes para-bd" /></SearchBox>
            <IconButton $w={18} aria-label="Actions rapides"><Glyph d={shapes.bolt} size={20} /></IconButton>
            <Divider $m={8} />
            <IconButton $w={28} aria-label="Aide"><FaQuestionCircle size={18} /></IconButton>
            <Account><Glyph d={shapes.user} size={15} color="#5f5f5f" />Mon compte<FaAngleDown size={12} /></Account>
            <FaceIcon size={33} plain />
          </TopBar>
          <ObjectForm />
        </MainColumn>
        <ScrollBar>
          <ScrollArrow aria-label="Défiler vers le haut"><Line size={9} w={2.500}><path d="M2 11l6-6 6 6" /></Line></ScrollArrow>
          <Track /><Thumb />
          <ScrollArrow aria-label="Défiler vers le bas"><Line size={9} w={2.500}><path d="M2 5l6 6 6-6" /></Line></ScrollArrow>
        </ScrollBar>
      </Page>
      <WindowsBar />
    </Screen>
  );
}
